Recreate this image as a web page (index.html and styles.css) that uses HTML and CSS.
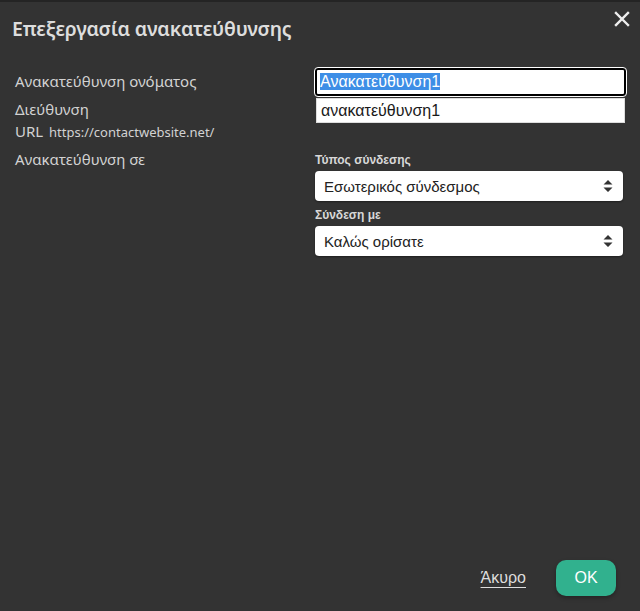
FILE: index.html
```html
<!DOCTYPE html>
<html lang="el">
<head>
    <meta charset="UTF-8">
    <meta name="viewport" content="width=device-width, initial-scale=1.0">
    <title>Επεξεργασία ανακατεύθυνσης</title>
    <link rel="stylesheet" href="styles.css">
</head>
<body>
    <div class="dialog">
        <div class="dialog-header">
            <h2>Επεξεργασία ανακατεύθυνσης</h2>
            <button class="close-btn" aria-label="Κλείσιμο">
                <svg width="16" height="16" viewBox="0 0 16 16">
                    <path d="M2 2 L14 14 M14 2 L2 14" stroke="#eeeeee" stroke-width="2.4" stroke-linecap="square"/>
                </svg>
            </button>
        </div>

        <div class="form">
            <div class="labels">
                <div class="label-name">Ανακατεύθυνση ονόματος</div>
                <div class="label-url">
                    Διεύθυνση<br>
                    URL <span class="url-base">https://contactwebsite.net/</span>
                </div>
                <div class="label-target">Ανακατεύθυνση σε</div>
            </div>
            <div class="fields">
                <div class="text-field focused"><span class="selected">Ανακατεύθυνση1</span></div>
                <div class="text-field">ανακατεύθυνση1</div>

                <div class="field-group">
                    <div class="field-label">Τύπος σύνδεσης</div>
                    <div class="select-box">
                        <span>Εσωτερικός σύνδεσμος</span>
                        <svg class="arrows" width="10" height="14" viewBox="0 0 10 14">
                            <path d="M5 1 L9.5 5.5 L0.5 5.5 Z M5 13 L9.5 8.5 L0.5 8.5 Z" fill="#333"/>
                        </svg>
                    </div>
                </div>
                <div class="field-group small-gap">
                    <div class="field-label">Σύνδεση με</div>
                    <div class="select-box">
                        <span>Καλώς ορίσατε</span>
                        <svg class="arrows" width="10" height="14" viewBox="0 0 10 14">
                            <path d="M5 1 L9.5 5.5 L0.5 5.5 Z M5 13 L9.5 8.5 L0.5 8.5 Z" fill="#333"/>
                        </svg>
                    </div>
                </div>
            </div>
        </div>

        <div class="dialog-footer">
            <a href="#" class="cancel-link">Άκυρο</a>
            <button class="ok-btn">OK</button>
        </div>
    </div>
</body>
</html>
```

FILE: styles.css
```css
body {
    margin: 0;
    background-color: #333333;
    font-family: "Noto Sans", "Open Sans", sans-serif;
    color: #d6d6d6;
    height: 611px;
    overflow: hidden;
}
.dialog {
    height: 100%;
    display: flex;
    flex-direction: column;
    border-top: 2px solid #242424;
    box-sizing: border-box;
}
.dialog-header {
    display: flex;
    justify-content: space-between;
    align-items: center;
    padding: 13px 6px 0 12px;
}
.dialog-header h2 {
    margin: 0;
    font-family: "Noto Sans", sans-serif;
    font-size: 19.5px;
    font-weight: 600;
    color: #dddddd;
    letter-spacing: -0.2px;
}
.close-btn {
    background: none;
    border: none;
    padding: 0;
    width: 24px;
    height: 24px;
    margin-top: -16px;
    cursor: pointer;
}
.form {
    display: flex;
    padding: 26px 14px 0 15px;
    flex: 1;
}
.labels {
    width: 300px;
    font-size: 15px;
    line-height: 22px;
    color: #d2d2d2;
}
.label-name {
    margin-top: 2px;
}
.label-url {
    margin-top: 6px;
}
.url-base {
    font-size: 13px;
    margin-left: 2px;
}
.label-target {
    margin-top: 5px;
}
.fields {
    flex: 1;
    font-family: "Liberation Sans", Arial, sans-serif;
}
.text-field {
    background: white;
    color: #1a1a1a;
    font-size: 16px;
    height: 23px;
    line-height: 23px;
    padding: 0 4px;
    margin: 2px 1px 0 1px;
    border: 1px solid #dddddd;
}
.text-field.focused {
    margin: 0;
    height: 24px;
    line-height: 24px;
    border: 2px solid #000000;
    border-radius: 3px;
    outline: 1px solid #ffffff;
    padding: 0 3px;
}
.selected {
    background: #3d8ee6;
    color: white;
}
.field-group {
    margin-top: 30px;
    margin-right: 3px;
}
.field-group.small-gap {
    margin-top: 7px;
}
.field-label {
    font-size: 12px;
    font-weight: bold;
    color: #d8d8d8;
    margin-bottom: 4px;
}
.select-box {
    display: flex;
    justify-content: space-between;
    align-items: center;
    background: white;
    color: #222222;
    font-size: 15px;
    height: 30px;
    padding: 0 10px 0 9px;
    border-radius: 4px;
    box-shadow: 0 1px 2px rgba(0, 0, 0, 0.4);
}
.dialog-footer {
    display: flex;
    justify-content: flex-end;
    align-items: center;
    padding: 0 24px 15px 0;
}
.cancel-link {
    color: #dddddd;
    font-family: "Liberation Sans", Arial, sans-serif;
    font-size: 16px;
    text-decoration: underline;
    text-underline-offset: 4px;
    margin-right: 30px;
}
.ok-btn {
    background-color: #31b18e;
    color: white;
    border: none;
    border-radius: 10px;
    width: 60px;
    height: 36px;
    font-family: "Liberation Sans", Arial, sans-serif;
    font-size: 16px;
    cursor: pointer;
    box-shadow: 0 2px 4px rgba(0, 0, 0, 0.3);
}
```
